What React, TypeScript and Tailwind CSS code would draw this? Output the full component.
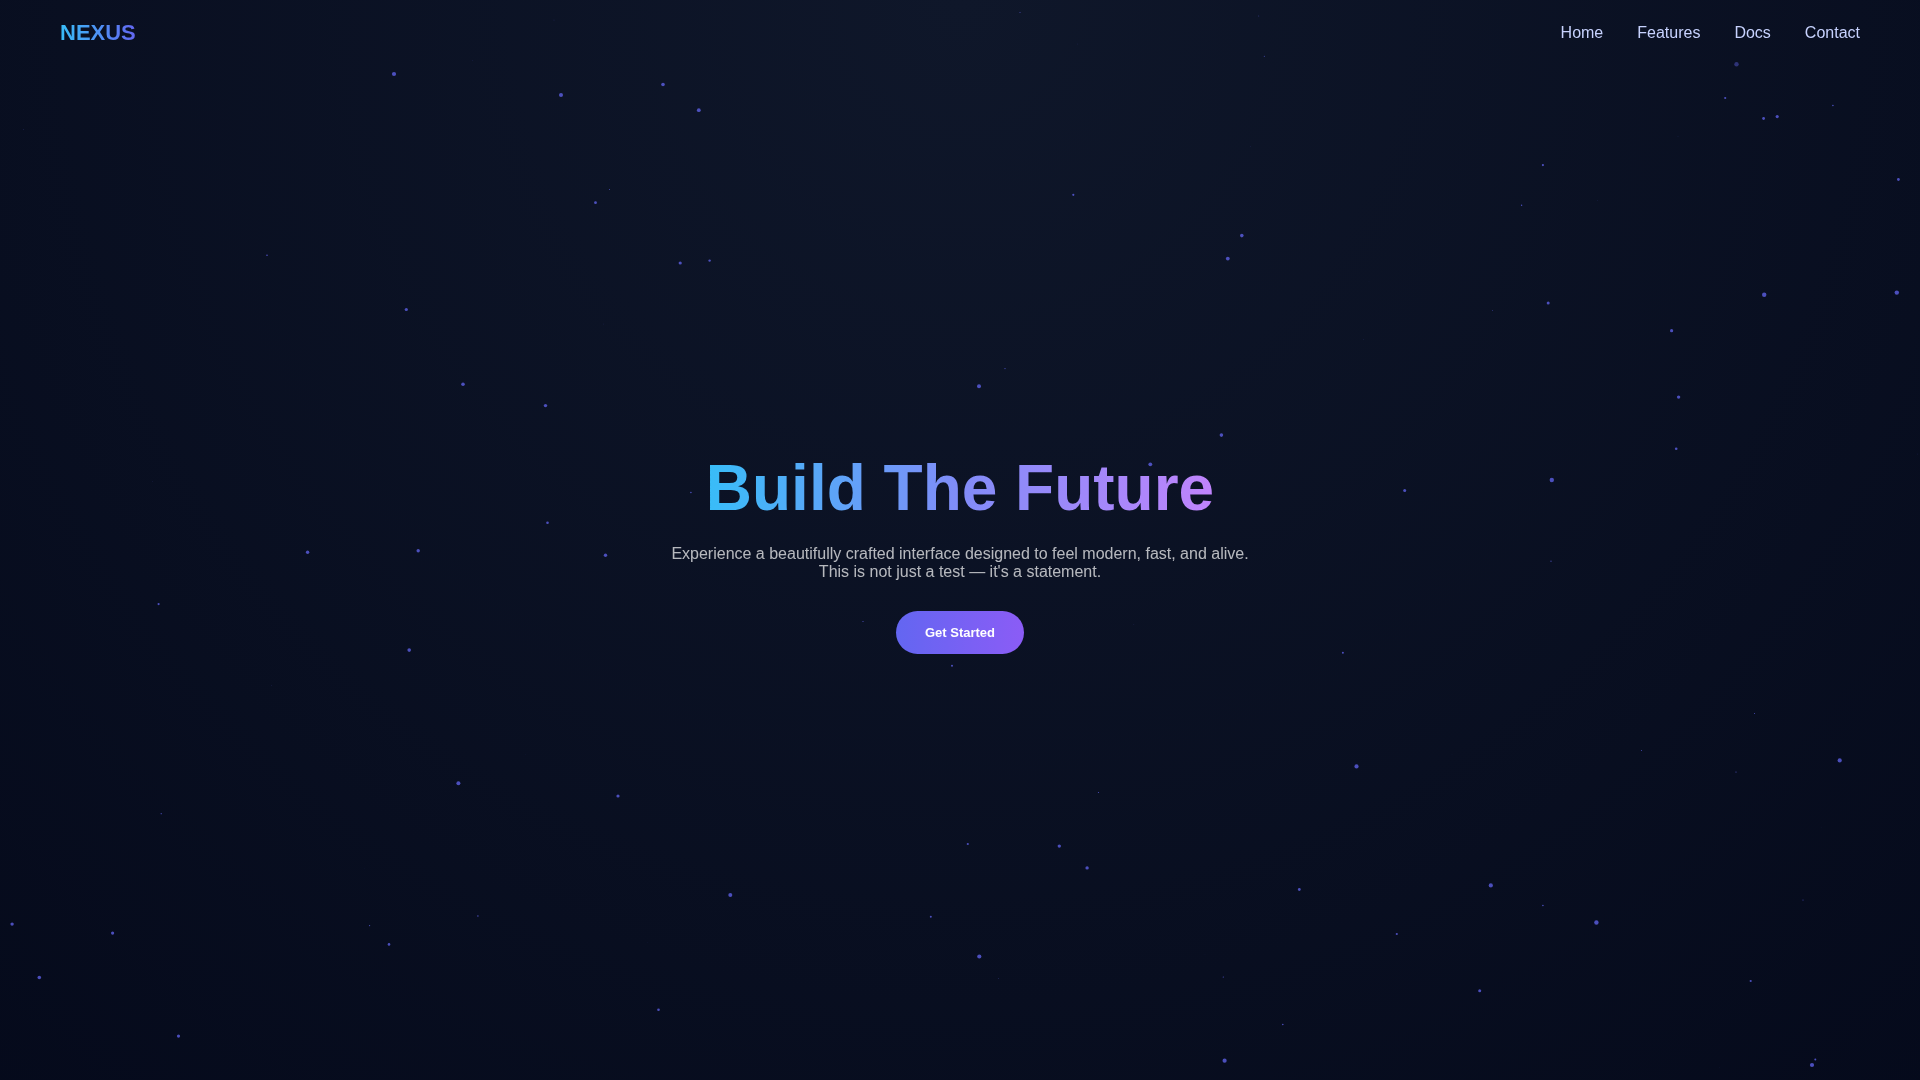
import React from 'react';

const NAV_LINKS = ['Home', 'Features', 'Docs', 'Contact'];

// x, y, radius
const PARTICLES: [number, number, number][] = [
  [394, 74, 2.1], [561, 95, 2], [472.2, 60.5, 0.2], [554, 20, 0.3], [23.3, 129.3, 0.3],
  [595.5, 202.7, 1.4], [609.5, 189.5, 0.5], [267, 255.3, 0.8], [406.3, 309.5, 1.6], [603.5, 324, 0.2],
  [663, 84.5, 1.8], [698.8, 110.2, 1.9], [1020, 12.5, 0.5], [1258.8, 16, 0.4], [1264.3, 56.3, 0.5],
  [1077.5, 44, 0.2], [1250.5, 146.8, 0.2], [1073.3, 194.8, 1.1], [1241.8, 235.6, 1.8], [1227.8, 258.6, 1.9],
  [680.2, 263, 1.6], [709.6, 260.6, 1.2], [1725.2, 98, 1.1], [1832.9, 105.5, 0.8], [1763.6, 118.5, 1.4],
  [1777.2, 116.6, 1.6], [1678, 136.8, 0.2], [1542.9, 165.1, 1.1], [1521.6, 205.2, 0.7], [1898.4, 179.5, 1.4],
  [1597.5, 200.7, 0.2], [1764.2, 294.8, 2.2], [1896.8, 292.6, 2.2], [1369, 281.4, 0.2], [1548.2, 303.1, 1.5],
  [1492.5, 310.5, 0.4], [1363.3, 339.7, 0.2], [1671.6, 330.7, 1.6], [1005, 368.6, 0.6], [979, 386.2, 2],
  [463, 384.3, 1.8], [545.5, 405.6, 1.7], [152.2, 481.3, 0.2], [547.5, 522.7, 1.3], [307.6, 552.2, 1.7],
  [418.2, 550.7, 1.7], [605.5, 555.2, 1.7], [158.6, 604.1, 1.1], [409.2, 650.1, 1.8], [271.4, 685.3, 0.2],
  [1221.4, 435.1, 1.8], [1150.3, 464.3, 1.9], [690.9, 492.5, 0.8], [863, 621.5, 0.6], [952, 665.8, 1],
  [1133.9, 624.3, 0.2], [1678.6, 397.1, 1.7], [1676.2, 448.8, 1.3], [1551.8, 480, 2.2], [1404.7, 490.5, 1.5],
  [1551, 561.2, 0.6], [1342.9, 652.7, 1], [1754.5, 713.5, 0.5], [1917.5, 454, 0.2], [458.4, 783.2, 2],
  [618, 796, 1.6], [525.3, 754.4, 0.2], [161.2, 813.7, 0.6], [364.5, 868.4, 0.2], [12.1, 924.1, 1.7],
  [112.6, 933.1, 1.6], [369.6, 925.6, 0.6], [477.9, 916, 0.7], [389, 944.4, 1.3], [39.3, 977.5, 1.8],
  [178.5, 1036.1, 1.6], [1098.5, 792.5, 0.6], [967.8, 844, 1.1], [1059.3, 846.1, 1.7], [1087.1, 867.9, 1.7],
  [730.3, 895.1, 2], [930.8, 916.7, 1], [979.3, 956.5, 2.1], [647.7, 942.4, 0.2], [998.4, 978.4, 0.3],
  [1205, 954.4, 0.2], [1223.3, 977, 0.6], [658.5, 1009.7, 1.3], [1224.6, 1060.7, 2.1], [1356.5, 766.4, 2.1],
  [1452, 754.4, 0.2], [1641.5, 750.5, 0.5], [1736, 772, 0.6], [1839.7, 760.4, 2.1], [1821.2, 827.4, 0.2],
  [1299.3, 889.5, 1.4], [1490.8, 885.4, 2.1], [1542.9, 905.5, 0.8], [1596.4, 922.5, 2.2], [1803, 900, 0.5],
  [1396.8, 934, 1.1], [1750.7, 981, 1.1], [1479.7, 990.8, 1.5], [1282.8, 1024.5, 0.8], [1815.3, 1059.4, 1],
  [1812, 1065, 2.1], [1719.6, 1067.4, 0.2],
];

function ParticleField() {
  return (
    <svg className="pointer-events-none fixed inset-0 h-full w-full fill-[#6366f1]/75" aria-hidden="true">
      {PARTICLES.map(([x, y, r]) => (
        <circle key={`${x}-${y}`} cx={x} cy={y} r={r} />
      ))}
      <circle cx={1736.5} cy={64.2} r={2.2} opacity={0.55} />
    </svg>
  );
}

export default function App() {
  return (
    <div className="min-h-screen bg-[radial-gradient(circle_1900px_at_top,#0f172a,#020617)] font-['Liberation_Sans',Arial,sans-serif] text-white">
      <ParticleField />

      <header className="relative flex items-center justify-between px-[60px] py-5">
        <div className="bg-[linear-gradient(90deg,#38bdf8,#6366f1)] bg-clip-text text-[22px] leading-[25px] font-bold text-transparent">
          NEXUS
        </div>
        <nav className="flex gap-[34px] text-base leading-[18px] text-[#c7d2fe]">
          {NAV_LINKS.map((link) => (
            <a key={link} href="#" className="transition-colors hover:text-[#38bdf8]">
              {link}
            </a>
          ))}
        </nav>
      </header>

      <main className="relative flex h-[90vh] flex-col items-center justify-center pt-1 text-center">
        <h1 className="mb-5 bg-[linear-gradient(90deg,#38bdf8,#818cf8,#c084fc)] bg-clip-text text-[64px] leading-[73px] font-bold text-transparent">
          Build The Future
        </h1>
        <p className="mb-[30px] max-w-[600px] text-base leading-[18px] text-white/70">
          Experience a beautifully crafted interface designed to feel modern, fast, and alive. This is not just a test — it's a statement.
        </p>
        <button
          type="button"
          className="cursor-pointer rounded-full bg-[linear-gradient(90deg,#6366f1,#8b5cf6)] px-[29px] py-3.5 text-[13px] leading-[15px] font-bold text-white transition-transform hover:scale-105"
        >
          Get Started
        </button>
      </main>
    </div>
  );
}
